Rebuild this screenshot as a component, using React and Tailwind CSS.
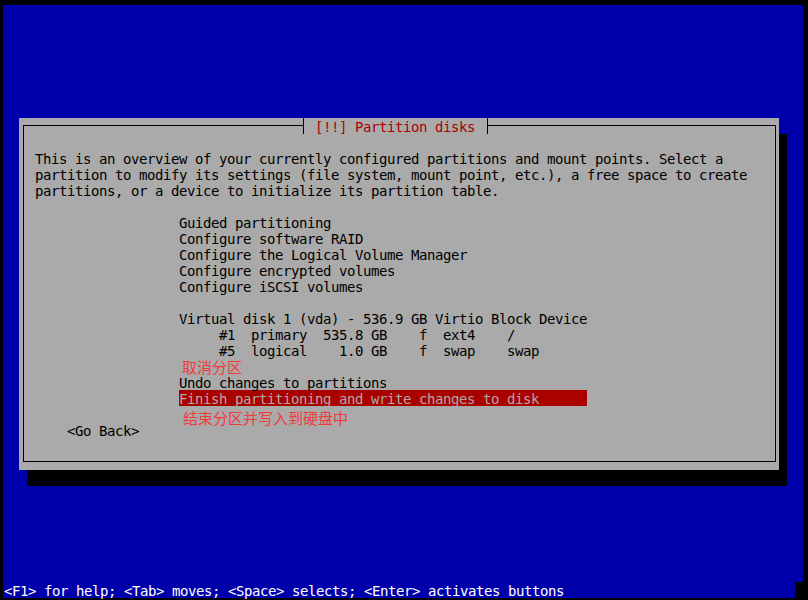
import React from "react";

const menuTop = [
  "Guided partitioning",
  "Configure software RAID",
  "Configure the Logical Volume Manager",
  "Configure encrypted volumes",
  "Configure iSCSI volumes",
];

const disk = [
  "Virtual disk 1 (vda) - 536.9 GB Virtio Block Device",
  "     #1  primary  535.8 GB    f  ext4    /",
  "     #5  logical    1.0 GB    f  swap    swap",
];

function Row({ children, className = "" }) {
  return <div className={`h-4 whitespace-pre pt-[2px] leading-[14px] ${className}`}>{children}</div>;
}

function Note({ children, className = "" }) {
  // red annotation drawn over the screenshot
  return (
    <div className="h-4">
      <div
        className={`font-['Noto_Sans_CJK_SC',sans-serif] text-[15px] leading-[12px] tracking-normal text-[#f03a3a] whitespace-nowrap ${className}`}
      >
        {children}
      </div>
    </div>
  );
}

function Dialog() {
  return (
    <div className="flex h-[352px] w-[760px] flex-col bg-[#aaaaaa] text-black shadow-[8px_16px_0_0_#000]">
      {/* top border with title */}
      <div className="flex h-4 pl-[4px] pr-[3px]">
        <div className="mt-[7px] w-[280px] border-l border-t border-black" />
        <div className="h-4 w-px bg-black" />
        <div className="ml-[11px] mr-[12px] w-[160px] whitespace-pre pt-[2px] leading-[14px] text-[#aa0000]">
          [!!] Partition disks
        </div>
        <div className="h-4 w-px bg-black" />
        <div className="mt-[7px] flex-1 border-r border-t border-black" />
      </div>

      <div className="mb-[8px] ml-[4px] mr-[3px] flex-1 border-x border-b border-black pb-[7px] pl-[11px]">
        <Row />
        <Row>This is an overview of your currently configured partitions and mount points. Select a</Row>
        <Row>partition to modify its settings (file system, mount point, etc.), a free space to create</Row>
        <Row>partitions, or a device to initialize its partition table.</Row>
        <Row />

        <div className="ml-[144px] w-[408px]">
          {menuTop.map((item) => (
            <Row key={item}>{item}</Row>
          ))}
          <Row />
          {disk.map((item) => (
            <Row key={item}>{item}</Row>
          ))}
          <Note className="ml-[3px] pt-[3px]">取消分区</Note>
          <Row>Undo changes to partitions</Row>
          <Row className="bg-[#aa0000] text-[#aaaaaa]">Finish partitioning and write changes to disk</Row>
          <Note className="ml-[4px] pt-[6px]">结束分区并写入到硬盘中</Note>
        </div>

        <Row className="ml-[32px]">&lt;Go Back&gt;</Row>
      </div>
    </div>
  );
}

export default function App() {
  return (
    <div className="h-[600px] w-[808px] overflow-hidden bg-black pl-[3px] pt-[5px] font-['DejaVu_Sans_Mono','Liberation_Mono',monospace] text-[14px] leading-4 tracking-[-0.43px]">
      <div className="h-[577px] w-[800px] bg-[#0000aa] pl-[16px] pt-[113px]">
        <Dialog />
      </div>
      <div className="flex h-4">
        <div className="w-[792px] whitespace-pre bg-[#0000aa] pl-[1px] pt-[2px] leading-[14px] text-white">
          &lt;F1&gt; for help; &lt;Tab&gt; moves; &lt;Space&gt; selects; &lt;Enter&gt; activates buttons
        </div>
      </div>
    </div>
  );
}
